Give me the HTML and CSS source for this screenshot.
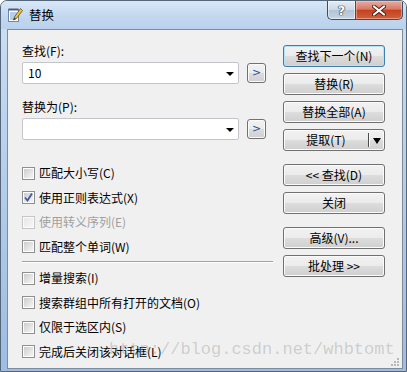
FILE: index.html
```html
<!DOCTYPE html>
<html lang="zh-CN">
<head>
  <meta charset="UTF-8" />
  <title>替换</title>
  <link rel="stylesheet" href="styles.css">
</head>
<body>
  <div class="window">
    <!-- Title bar -->
    <div class="titlebar">
      <svg class="app-icon" width="16" height="16" viewBox="0 0 16 16">
        <rect x="1.5" y="2.5" width="10" height="12" fill="#fff" stroke="#6f86a8" />
        <rect x="1.5" y="1.5" width="10" height="2" fill="#4b5f82" />
        <path d="M3 6h7M3 8h7M3 10h6M3 12h5" stroke="#6f9ad6" stroke-width="1" />
        <path d="M13.5 1.5l2 2-6 8-3 1.5 1-3z" fill="#f4c53c" stroke="#5a4a20" stroke-width="0.8" />
        <path d="M7.5 10.5l-1 2.5 2.5-1z" fill="#333" />
      </svg>
      <span class="title">替换</span>
      <div class="caption-buttons">
        <div class="cap-btn help">?</div>
        <div class="cap-btn close">
          <svg width="14" height="11" viewBox="0 0 14 11">
            <path d="M2 1.5l10 8M12 1.5l-10 8" stroke="#4a2018" stroke-width="4" stroke-linecap="round" />
            <path d="M2 1.5l10 8M12 1.5l-10 8" stroke="#fff" stroke-width="2.2" stroke-linecap="round" />
          </svg>
        </div>
      </div>
    </div>

    <!-- Client area -->
    <div class="client">
      <div class="left-col">
        <div class="field-label">查找(F):</div>
        <div class="combo-row">
          <div class="combo"><span class="combo-text">10</span><span class="combo-arrow"></span></div>
          <button class="mini-btn">&gt;</button>
        </div>

        <div class="field-label second">替换为(P):</div>
        <div class="combo-row">
          <div class="combo"><span class="combo-text"></span><span class="combo-arrow"></span></div>
          <button class="mini-btn">&gt;</button>
        </div>

        <div class="options first-group">
          <div class="check-row"><span class="checkbox"></span>匹配大小写(C)</div>
          <div class="check-row"><span class="checkbox checked">
            <svg width="9" height="9" viewBox="0 0 9 9"><path d="M1 4.5l2.5 3 4.5-7" fill="none" stroke="#3d5a98" stroke-width="1.8" /></svg>
          </span>使用正则表达式(X)</div>
          <div class="check-row disabled"><span class="checkbox"></span>使用转义序列(E)</div>
          <div class="check-row"><span class="checkbox"></span>匹配整个单词(W)</div>
        </div>

        <div class="separator"></div>

        <div class="options">
          <div class="check-row"><span class="checkbox"></span>增量搜索(I)</div>
          <div class="check-row"><span class="checkbox"></span>搜索群组中所有打开的文档(O)</div>
          <div class="check-row"><span class="checkbox"></span>仅限于选区内(S)</div>
          <div class="check-row"><span class="checkbox"></span>完成后关闭该对话框(L)</div>
        </div>
      </div>

      <div class="right-col">
        <button class="btn default">查找下一个(N)</button>
        <button class="btn">替换(R)</button>
        <button class="btn">替换全部(A)</button>
        <button class="btn split"><span class="split-text">提取(T)</span><span class="split-line"></span><span class="split-arrow"></span></button>
        <button class="btn spaced">&lt;&lt; 查找(D)</button>
        <button class="btn">关闭</button>
        <button class="btn spaced">高级(V)...</button>
        <button class="btn">批处理 &gt;&gt;</button>
      </div>

      <div class="watermark">http://blog.csdn.net/whbtomt</div>
      <svg class="grip" width="8" height="8" viewBox="0 0 8 8">
        <rect x="6" y="0" width="2" height="2" fill="#b8b8b8" />
        <rect x="3" y="3" width="2" height="2" fill="#b8b8b8" />
        <rect x="6" y="3" width="2" height="2" fill="#b8b8b8" />
        <rect x="0" y="6" width="2" height="2" fill="#b8b8b8" />
        <rect x="3" y="6" width="2" height="2" fill="#b8b8b8" />
        <rect x="6" y="6" width="2" height="2" fill="#b8b8b8" />
      </svg>
    </div>
  </div>
</body>
</html>
```

FILE: styles.css
```css
* {
  box-sizing: border-box;
}

body {
  margin: 0;
  font-family: "Noto Sans CJK SC", "Noto Sans", sans-serif;
  font-size: 12px;
  color: #000;
  background: #fff;
}

.window {
  width: 407px;
  height: 372px;
  border: 1px solid #56677c;
  border-radius: 7px 7px 0 0;
  background: linear-gradient(to bottom, #cde0f4 0%, #bdd4ee 30%, #aac6e7 70%, #9fbde2 100%);
  display: flex;
  flex-direction: column;
  overflow: hidden;
}

/* Title bar */
.titlebar {
  height: 28px;
  flex: none;
  display: flex;
  align-items: flex-start;
  background: linear-gradient(to bottom, #d8e7f7 0%, #c3d8ef 55%, #b9d1ec 100%);
}

.app-icon {
  margin: 6px 0 0 6px;
  flex: none;
}

.title {
  margin: 6px 0 0 6px;
  line-height: 16px;
  font-size: 12.5px;
}

.caption-buttons {
  margin-left: auto;
  margin-right: 3px;
  display: flex;
}

.cap-btn {
  height: 19px;
  border: 1px solid #3e4e62;
  border-top: none;
  display: flex;
  align-items: center;
  justify-content: center;
}

.cap-btn.help {
  width: 28px;
  border-right: none;
  border-radius: 0 0 0 5px;
  background: linear-gradient(to bottom, #e4ecf5 0%, #ccd8e6 50%, #b3c3d6 52%, #c6d4e3 100%);
  color: #fff;
  font-family: "DejaVu Sans", sans-serif;
  font-weight: bold;
  font-size: 13px;
  text-shadow: 0 0 1px #222, 0 0 1px #222, 0 0 1px #222;
  box-shadow: inset 0 0 0 1px rgba(255, 255, 255, 0.5);
}

.cap-btn.close {
  width: 48px;
  border-radius: 0 0 5px 0;
  background: linear-gradient(to bottom, #e8ab9e 0%, #d97a66 45%, #c4421f 52%, #d0603e 100%);
  box-shadow: inset 0 0 0 1px rgba(255, 220, 200, 0.45);
}

/* Client area */
.client {
  position: relative;
  flex: none;
  height: 340px;
  margin: 0 3px 2px 6px;
  border: 1px solid #7f8b99;
  background: #f0f0f0;
  padding: 13px 0 0 14px;
  display: flex;
  align-items: flex-start;
  gap: 10px;
}

.left-col {
  width: 251px;
  display: flex;
  flex-direction: column;
}

.field-label {
  line-height: 16px;
  height: 16px;
}

.field-label.second {
  margin-top: 15px;
}

.combo-row {
  margin-top: 3px;
  display: flex;
  align-items: center;
}

.combo {
  width: 217px;
  height: 22px;
  border: 1px solid #c3c6cb;
  border-radius: 2px;
  background: #fff;
  display: flex;
  align-items: center;
  padding: 0 4px 0 5px;
}

.combo-text {
  flex: 1;
  line-height: 16px;
}

.combo-arrow {
  width: 0;
  height: 0;
  border-left: 4px solid transparent;
  border-right: 4px solid transparent;
  border-top: 4px solid #000;
  margin-top: 2px;
}

.mini-btn {
  margin-left: 8px;
  width: 19px;
  height: 20px;
  padding: 0;
  border: 1px solid #707070;
  border-radius: 3px;
  background: linear-gradient(to bottom, #f2f2f2 0%, #ebebeb 50%, #dddddd 50%, #cfcfcf 100%);
  box-shadow: inset 0 0 0 1px #fbfbfb;
  color: #1d4fa0;
  font-family: "DejaVu Sans", sans-serif;
  font-size: 11px;
  line-height: 16px;
}

/* Checkbox options */
.options {
  display: flex;
  flex-direction: column;
}

.first-group {
  margin-top: 21px;
}

.check-row {
  height: 24.5px;
  display: flex;
  align-items: center;
  gap: 4px;
  line-height: 16px;
}

.check-row.disabled {
  color: #a0a0a0;
}

.checkbox {
  width: 13px;
  height: 13px;
  flex: none;
  border: 1px solid #8e8f8f;
  padding: 1px;
  background: linear-gradient(135deg, #cdcdcd, #f5f5f5) content-box, #fdfdfd;
  display: flex;
  align-items: center;
  justify-content: center;
}

.disabled .checkbox {
  border-color: #c6c6c6;
  background: linear-gradient(135deg, #e8e8e8, #f6f6f6) content-box, #fbfbfb;
}

.separator {
  margin: 2px 0 3px;
  height: 2px;
  border-top: 1px solid #a0a0a0;
  border-bottom: 1px solid #fff;
}

/* Right buttons */
.right-col {
  width: 102px;
  padding-top: 2px;
  display: flex;
  flex-direction: column;
  gap: 6px;
}

.btn {
  height: 22px;
  padding: 0;
  border: 1px solid #707070;
  border-radius: 3px;
  background: linear-gradient(to bottom, #f2f2f2 0%, #ebebeb 50%, #dddddd 50%, #cfcfcf 100%);
  box-shadow: inset 0 0 0 1px #fbfbfb;
  font-family: inherit;
  font-size: 12px;
  line-height: 16px;
  color: #000;
  display: flex;
  align-items: center;
  justify-content: center;
}

.btn.default {
  border-color: #3c7fb1;
  box-shadow: inset 0 0 0 1px #b6e1f6;
}

.btn.spaced {
  margin-top: 7px;
}

.btn.split {
  justify-content: flex-start;
}

.split-text {
  flex: 1;
  text-align: center;
  padding-left: 0;
}

.split-line {
  width: 2px;
  height: 14px;
  background: #4a4a4a;
  border-right: 1px solid #fff;
}

.split-arrow {
  width: 0;
  height: 0;
  margin: 1px 3px 0 3px;
  border-left: 4.5px solid transparent;
  border-right: 4.5px solid transparent;
  border-top: 6px solid #000;
}

/* Overlays */
.watermark {
  position: absolute;
  left: 101px;
  top: 310px;
  font-family: "Liberation Mono", monospace;
  font-size: 17px;
  line-height: 20px;
  color: rgba(120, 120, 120, 0.3);
  pointer-events: none;
}

.grip {
  position: absolute;
  right: 3px;
  bottom: 2px;
}
```
